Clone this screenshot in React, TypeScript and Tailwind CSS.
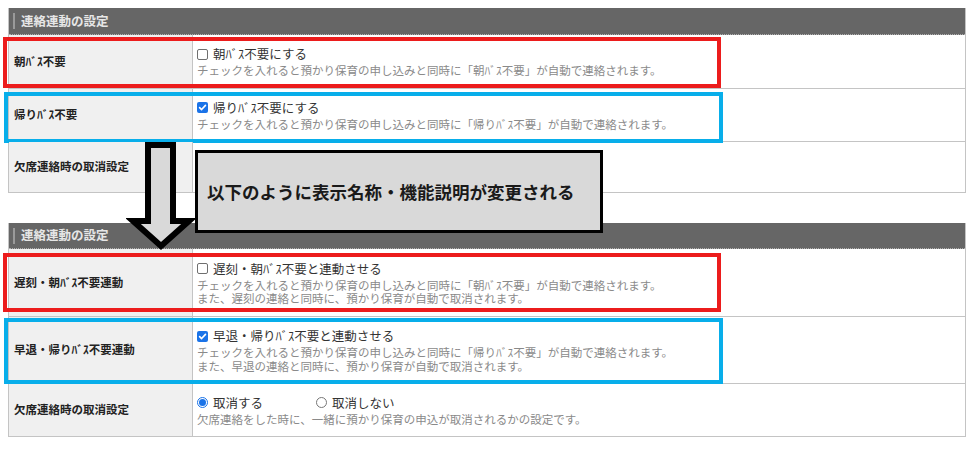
import React from "react";

const FONT = { fontFamily: '"Noto Sans CJK JP", "Noto Sans", sans-serif' };

function Checkbox({ checked }: { checked?: boolean }) {
  if (checked) {
    return (
      <span className="inline-flex w-[11px] h-[11px] rounded-[2px] bg-[#1a73e8] items-center justify-center shrink-0">
        <svg width="9" height="9" viewBox="0 0 10 10">
          <path d="M1.8 5.2 L4 7.3 L8.3 2.6" fill="none" stroke="#fff" strokeWidth="1.8" strokeLinecap="round" strokeLinejoin="round" />
        </svg>
      </span>
    );
  }
  return <span className="inline-block w-[11px] h-[11px] rounded-[2px] border border-[#6f6f6f] bg-white shrink-0" />;
}

function Radio({ checked }: { checked?: boolean }) {
  if (checked) {
    return (
      <span className="inline-flex w-[11px] h-[11px] rounded-full border border-[#1a73e8] items-center justify-center shrink-0">
        <span className="w-[7px] h-[7px] rounded-full bg-[#1a73e8]" />
      </span>
    );
  }
  return <span className="inline-block w-[11px] h-[11px] rounded-full border border-[#777] bg-white shrink-0" />;
}

type Row = {
  label: string;
  h: string;
  content?: React.ReactNode;
  box?: React.ReactNode;
};

function Header({ h }: { h: string }) {
  return (
    <div className={`${h} bg-[#666666] border-b border-dotted border-[#b0b0b0] flex items-center`}>
      <span className="ml-[4px] w-[2px] h-[16px] bg-[#9a9a9a]" />
      <span className="ml-[6px] text-[12.5px] font-bold text-[#e6e6e6] leading-none">連絡連動の設定</span>
    </div>
  );
}

function Table({ headerH, rows }: { headerH: string; rows: Row[] }) {
  return (
    <div className="border-x border-[#c4c4c4]">
      <Header h={headerH} />
      {rows.map((r, i) => (
        <div key={i} className={`relative flex ${r.h} border-b border-[#c4c4c4]`}>
          <div className="w-[184px] shrink-0 bg-[#f0f0f0] border-r border-[#c4c4c4] flex items-center pl-[5px] text-[11.5px] font-bold text-[#222] leading-none">
            {r.label}
          </div>
          <div className="flex-1 flex flex-col justify-center pl-[4px]">{r.content}</div>
          {r.box}
        </div>
      ))}
    </div>
  );
}

function Main({ children }: { children: React.ReactNode }) {
  return <div className="flex items-center gap-[5px] text-[12.5px] leading-[18px] text-[#333]">{children}</div>;
}

function Desc({ lines }: { lines: string[] }) {
  return (
    <div className="mt-[1px] text-[11.5px] text-[#8a8a8a] whitespace-nowrap">
      {lines.map((l, i) => (
        <div key={i} className="leading-[13.5px]">
          {l}
        </div>
      ))}
    </div>
  );
}

export default function App() {
  const rows1: Row[] = [
    {
      label: "朝ﾊﾞｽ不要",
      h: "h-[54px]",
      content: (
        <>
          <Main>
            <Checkbox />
            <span>朝ﾊﾞｽ不要にする</span>
          </Main>
          <Desc lines={["チェックを入れると預かり保育の申し込みと同時に「朝ﾊﾞｽ不要」が自動で連絡されます。"]} />
        </>
      ),
      box: <div className="absolute left-[-6px] top-[2px] w-[718px] h-[51px] border-[4px] border-[#ec1c1c] pointer-events-none" />,
    },
    {
      label: "帰りﾊﾞｽ不要",
      h: "h-[53px]",
      content: (
        <>
          <Main>
            <Checkbox checked />
            <span>帰りﾊﾞｽ不要にする</span>
          </Main>
          <Desc lines={["チェックを入れると預かり保育の申し込みと同時に「帰りﾊﾞｽ不要」が自動で連絡されます。"]} />
        </>
      ),
      box: <div className="absolute left-[-5px] top-[3px] w-[719px] h-[51px] border-[4px] border-[#08aeea] pointer-events-none" />,
    },
    { label: "欠席連絡時の取消設定", h: "h-[51px]" },
  ];

  const rows2: Row[] = [
    {
      label: "遅刻・朝ﾊﾞｽ不要連動",
      h: "h-[68px]",
      content: (
        <>
          <Main>
            <Checkbox />
            <span>遅刻・朝ﾊﾞｽ不要と連動させる</span>
          </Main>
          <Desc
            lines={[
              "チェックを入れると預かり保育の申し込みと同時に「朝ﾊﾞｽ不要」が自動で連絡されます。",
              "また、遅刻の連絡と同時に、預かり保育が自動で取消されます。",
            ]}
          />
        </>
      ),
      box: <div className="absolute left-[-6px] top-[4px] w-[718px] h-[59px] border-[4px] border-[#ec1c1c] pointer-events-none" />,
    },
    {
      label: "早退・帰りﾊﾞｽ不要連動",
      h: "h-[67px]",
      content: (
        <>
          <Main>
            <Checkbox checked />
            <span>早退・帰りﾊﾞｽ不要と連動させる</span>
          </Main>
          <Desc
            lines={[
              "チェックを入れると預かり保育の申し込みと同時に「帰りﾊﾞｽ不要」が自動で連絡されます。",
              "また、早退の連絡と同時に、預かり保育が自動で取消されます。",
            ]}
          />
        </>
      ),
      box: <div className="absolute left-[-5px] top-[1px] w-[719px] h-[66px] border-[4px] border-[#08aeea] pointer-events-none" />,
    },
    {
      label: "欠席連絡時の取消設定",
      h: "h-[53px]",
      content: (
        <>
          <Main>
            <Radio checked />
            <span className="w-[98px]">取消する</span>
            <Radio />
            <span>取消しない</span>
          </Main>
          <Desc lines={["欠席連絡をした時に、一緒に預かり保育の申込が取消されるかの設定です。"]} />
        </>
      ),
    },
  ];

  return (
    <div className="relative w-[972px] h-[456px] bg-white pt-[8px] pl-[8px] pr-[6px] overflow-hidden" style={FONT}>
      <Table headerH="h-[27px]" rows={rows1} />
      <div className="mt-[30px]">
        <Table headerH="h-[26px]" rows={rows2} />
      </div>

      {/* annotation arrow */}
      <svg className="absolute left-[126px] top-[140px]" width="72" height="114" viewBox="126 140 72 114">
        <polygon
          points="148,145 173,145 173,221 189,221 161,246 133,221 148,221"
          fill="#d9d9d9"
          stroke="#000"
          strokeWidth="6"
          strokeLinejoin="miter"
        />
      </svg>

      {/* annotation text box */}
      <div className="absolute left-[195px] top-[150px] w-[408px] h-[83px] bg-[#d9d9d9] border-[3px] border-black flex items-center pl-[9px]">
        <span className="text-[17.5px] font-bold text-[#1a1a1a] leading-none whitespace-nowrap">
          以下のように表示名称・機能説明が変更される
        </span>
      </div>
    </div>
  );
}
